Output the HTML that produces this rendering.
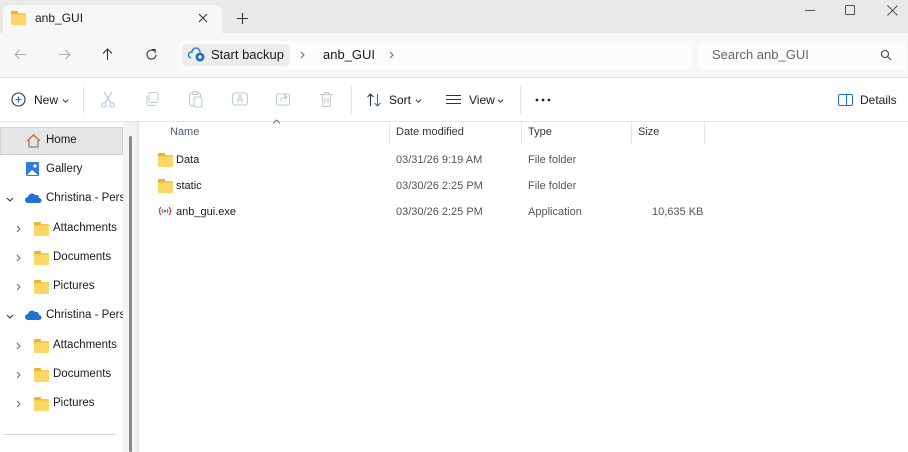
<!DOCTYPE html>
<html><head><style>
*{margin:0;padding:0;box-sizing:border-box}
body{width:908px;height:452px;overflow:hidden;background:#fff;font-family:"Segoe UI","Liberation Sans",sans-serif;font-size:12px;color:#1a1a1a;position:relative}
.a{position:absolute}
.t{position:absolute;white-space:nowrap}
.fold{position:absolute;width:15px;height:12px;background:#f8ca4d;border-radius:1px}
.fold:before{content:"";position:absolute;left:0;top:-2px;width:7px;height:3px;background:#e9b23a;border-radius:1px 1px 0 0}
.fold:after{content:"";position:absolute;left:0;top:2px;width:15px;height:10px;background:#fcd766;border-radius:1px}
.sb{font-size:11.5px}
</style></head><body>
<svg width="0" height="0" style="position:absolute"><defs>
<symbol id="cr" viewBox="0 0 8 8"><path d="M3 1l3 3-3 3" fill="none" stroke="#666" stroke-width="1"/></symbol>
<symbol id="cd" viewBox="0 0 8 8"><path d="M1 3l3 3 3-3" fill="none" stroke="#333" stroke-width="1.1"/></symbol>
</defs></svg>
<!-- title bar -->
<div class="a" style="left:0;top:0;width:908px;height:33px;background:#e9e9e9"></div>
<div class="a" style="left:3px;top:5px;width:219px;height:29px;background:#f7f7f7;border-radius:7px 7px 0 0"></div>
<div class="fold" style="left:11px;top:13px"></div>
<div class="t" style="left:35px;top:11px;font-size:12px">anb_GUI</div>
<svg class="a" style="left:198px;top:13px" width="10" height="10"><path d="M1 1l8 8M9 1l-8 8" stroke="#333" stroke-width="1.1"/></svg>
<svg class="a" style="left:237px;top:13px" width="11" height="11"><path d="M5.5 0v11M0 5.5h11" stroke="#333" stroke-width="1.1"/></svg>
<div class="a" style="left:805px;top:10px;width:10px;height:1px;background:#555"></div>
<div class="a" style="left:845px;top:5px;width:10px;height:10px;border:1px solid #555;border-radius:1px"></div>
<svg class="a" style="left:887px;top:5px" width="11" height="11"><path d="M.5.5l10 10M10.5.5l-10 10" stroke="#555" stroke-width="1"/></svg>
<!-- address row -->
<div class="a" style="left:0;top:33px;width:908px;height:45px;background:#f7f7f7;border-bottom:1px solid #dedede"></div>
<svg class="a" style="left:14px;top:49px" width="13" height="11"><path d="M12 5.5H1M5.5 1L1 5.5 5.5 10" fill="none" stroke="#aaa" stroke-width="1.1"/></svg>
<svg class="a" style="left:58px;top:49px" width="13" height="11"><path d="M1 5.5h11M7.5 1L12 5.5 7.5 10" fill="none" stroke="#aaa" stroke-width="1.1"/></svg>
<svg class="a" style="left:102px;top:48px" width="11" height="13"><path d="M5.5 12V1M1 5.5L5.5 1 10 5.5" fill="none" stroke="#333" stroke-width="1.1"/></svg>
<svg class="a" style="left:145px;top:48px" width="13" height="13"><path d="M11 6.5A4.5 4.5 0 1 1 9.5 3.2" fill="none" stroke="#333" stroke-width="1.1"/><path d="M7 1.5h3.2v3.2" fill="none" stroke="#333" stroke-width="1.1"/></svg>
<div class="a" style="left:180px;top:41px;width:512px;height:29px;background:#fcfcfc;border-radius:4px"></div>
<div class="a" style="left:182px;top:44px;width:108px;height:22px;background:#ececec;border-radius:4px"></div>
<svg class="a" style="left:188px;top:47px" width="18" height="16"><path d="M3 11a3 3 0 0 1 1-6 4 4 0 0 1 8 0" fill="none" stroke="#1f6fc4" stroke-width="1.3"/><circle cx="12" cy="10" r="4.5" fill="#1f6fc4"/><path d="M12 8v4M10 10h4" stroke="#fff" stroke-width="1.2"/></svg>
<div class="t" style="left:211px;top:47px;font-size:13px">Start backup</div>
<svg class="a" style="left:298px;top:51px" width="8" height="8"><use href="#cr"/></svg>
<div class="t" style="left:323px;top:47px;font-size:13px">anb_GUI</div>
<svg class="a" style="left:387px;top:51px" width="8" height="8"><use href="#cr"/></svg>
<div class="a" style="left:699px;top:41px;width:207px;height:29px;background:#fcfcfc;border-radius:4px"></div>
<div class="t" style="left:712px;top:47px;font-size:13px;color:#666">Search anb_GUI</div>
<svg class="a" style="left:880px;top:49px" width="12" height="12"><circle cx="5" cy="5" r="3.5" fill="none" stroke="#444" stroke-width="1.1"/><path d="M7.5 7.5L11 11" stroke="#444" stroke-width="1.1"/></svg>
<!-- toolbar -->
<div class="a" style="left:0;top:121px;width:908px;height:1px;background:#e5e5e5"></div>
<svg class="a" style="left:11px;top:92px" width="15" height="15"><circle cx="7.5" cy="7.5" r="6.5" fill="none" stroke="#333" stroke-width="1.1"/><path d="M7.5 4.5v6M4.5 7.5h6" stroke="#1f6fc4" stroke-width="1.1"/></svg>
<div class="t" style="left:34px;top:93px;font-size:12px">New</div>
<svg class="a" style="left:62px;top:97px" width="7" height="7"><use href="#cd"/></svg>
<div class="a" style="left:83px;top:86px;width:1px;height:28px;background:#e2e2e2"></div>
<svg class="a" style="left:100px;top:91px" width="16" height="17"><path d="M4 1l7 11M12 1L5 12" stroke="#a9c4e3" stroke-width="1.1" fill="none"/><circle cx="4" cy="14" r="2.2" fill="none" stroke="#a9c4e3"/><circle cx="12" cy="14" r="2.2" fill="none" stroke="#a9c4e3"/></svg>
<svg class="a" style="left:144px;top:91px" width="16" height="16"><rect x="5" y="1.5" width="9" height="10" rx="2" fill="none" stroke="#b8c8dc"/><path d="M3 4.5v7a3 3 0 0 0 3 3h5" fill="none" stroke="#b8c8dc"/></svg>
<svg class="a" style="left:188px;top:90px" width="16" height="18"><rect x="1.5" y="3" width="11" height="13" rx="2" fill="none" stroke="#c3c3c3"/><rect x="6" y="7" width="8" height="10" rx="1.5" fill="#fff" stroke="#b8c8dc"/><rect x="4.5" y="1.5" width="5" height="3" rx="1" fill="#fff" stroke="#c3c3c3"/></svg>
<svg class="a" style="left:231px;top:91px" width="18" height="16"><rect x="1.5" y="2" width="15" height="12" rx="3" fill="none" stroke="#b8c8dc"/><path d="M6 11l3-7 3 7M7 9h4" stroke="#b8c8dc" fill="none"/></svg>
<svg class="a" style="left:275px;top:91px" width="17" height="16"><rect x="1.5" y="3" width="13" height="11" rx="2" fill="none" stroke="#b8c8dc"/><path d="M5 10c1-3 3-4 7-4M9.5 3.5L12 6 9.5 8.5" fill="none" stroke="#b8c8dc"/></svg>
<svg class="a" style="left:319px;top:91px" width="15" height="17"><path d="M1 3.5h13M5.5 3.5V1.5h4v2M3 3.5l1 12h7l1-12M6 6.5v6M9 6.5v6" fill="none" stroke="#c3c3c3"/></svg>
<div class="a" style="left:351px;top:86px;width:1px;height:28px;background:#e2e2e2"></div>
<svg class="a" style="left:366px;top:92px" width="16" height="16"><path d="M4.5 14V2M1.5 5l3-3 3 3" fill="none" stroke="#333" stroke-width="1.1"/><path d="M11.5 2v12M8.5 11l3 3 3-3" fill="none" stroke="#1f6fc4" stroke-width="1.1"/></svg>
<div class="t" style="left:389px;top:93px;font-size:12px">Sort</div>
<svg class="a" style="left:415px;top:97px" width="7" height="7"><use href="#cd"/></svg>
<svg class="a" style="left:446px;top:94px" width="15" height="11"><path d="M0 1.5h15M0 5.5h15M0 9.5h15" stroke="#333" stroke-width="1"/></svg>
<div class="t" style="left:469px;top:93px;font-size:12px">View</div>
<svg class="a" style="left:497px;top:97px" width="7" height="7"><use href="#cd"/></svg>
<div class="a" style="left:520px;top:86px;width:1px;height:28px;background:#e2e2e2"></div>
<svg class="a" style="left:535px;top:98px" width="16" height="4"><circle cx="2" cy="2" r="1.4" fill="#222"/><circle cx="8" cy="2" r="1.4" fill="#222"/><circle cx="14" cy="2" r="1.4" fill="#222"/></svg>
<div class="a" style="left:838px;top:94px;width:15px;height:12px;border:1.3px solid #1f6fc4;border-radius:2px"></div>
<div class="a" style="left:846px;top:94px;width:1.3px;height:12px;background:#1f6fc4"></div>
<div class="t" style="left:860px;top:93px;font-size:12px">Details</div>
<!-- sidebar -->
<div class="a" style="left:0;top:127px;width:123px;height:28px;background:#e5e5e5;border:1px solid #cfcfcf"></div>
<svg class="a" style="left:25px;top:133px" width="17" height="15"><path d="M2 8L8.5 2 15 8" fill="none" stroke="#d86b2a" stroke-width="1.5"/><path d="M4 7v7h9V7" fill="none" stroke="#888" stroke-width="1.3"/></svg>
<div class="t sb" style="left:46px;top:134px">Home</div>
<svg class="a" style="left:25px;top:161px" width="15" height="16"><rect x="1" y="1" width="13" height="14" rx="1" fill="#2f7fd6"/><path d="M2 14l5-5 6 5z" fill="#fff"/><circle cx="10" cy="5" r="1.6" fill="#fff"/></svg>
<div class="t sb" style="left:46px;top:163px">Gallery</div>
<svg class="a" style="left:6px;top:195px" width="8" height="8"><use href="#cd"/></svg>
<svg class="a" style="left:25px;top:193px" width="17" height="11"><path d="M3 10a3 3 0 0 1 0-6 4 4 0 0 1 7-2 3 3 0 0 1 4 3 2.5 2.5 0 0 1 0 5z" fill="#1e73d6"/></svg>
<div class="t sb" style="left:46px;top:192px;width:77px;overflow:hidden">Christina - Personal</div>
<svg class="a" style="left:14px;top:225px" width="8" height="8"><use href="#cr"/></svg><div class="fold" style="left:34px;top:224px"></div><div class="t sb" style="left:53px;top:222px">Attachments</div>
<svg class="a" style="left:14px;top:254px" width="8" height="8"><use href="#cr"/></svg><div class="fold" style="left:34px;top:253px"></div><div class="t sb" style="left:53px;top:251px">Documents</div>
<svg class="a" style="left:14px;top:283px" width="8" height="8"><use href="#cr"/></svg><div class="fold" style="left:34px;top:282px"></div><div class="t sb" style="left:53px;top:280px">Pictures</div>
<svg class="a" style="left:6px;top:312px" width="8" height="8"><use href="#cd"/></svg>
<svg class="a" style="left:25px;top:310px" width="17" height="11"><path d="M3 10a3 3 0 0 1 0-6 4 4 0 0 1 7-2 3 3 0 0 1 4 3 2.5 2.5 0 0 1 0 5z" fill="#1e73d6"/></svg>
<div class="t sb" style="left:46px;top:309px;width:77px;overflow:hidden">Christina - Personal</div>
<svg class="a" style="left:14px;top:342px" width="8" height="8"><use href="#cr"/></svg><div class="fold" style="left:34px;top:341px"></div><div class="t sb" style="left:53px;top:339px">Attachments</div>
<svg class="a" style="left:14px;top:371px" width="8" height="8"><use href="#cr"/></svg><div class="fold" style="left:34px;top:370px"></div><div class="t sb" style="left:53px;top:368px">Documents</div>
<svg class="a" style="left:14px;top:400px" width="8" height="8"><use href="#cr"/></svg><div class="fold" style="left:34px;top:399px"></div><div class="t sb" style="left:53px;top:397px">Pictures</div>
<div class="a" style="left:4px;top:434px;width:111px;height:1px;background:#d5d5d5"></div>
<div class="a" style="left:123px;top:122px;width:17px;height:330px;background:#f3f3f3"></div>
<div class="a" style="left:129px;top:136px;width:3px;height:316px;background:#8a8a8a;border-radius:2px"></div>
<div class="a" style="left:137px;top:122px;width:1px;height:330px;background:#e0e0e0"></div>
<!-- header -->
<svg class="a" style="left:272px;top:119px" width="9" height="5"><path d="M1 4.5L4.5 1 8 4.5" fill="none" stroke="#777"/></svg>
<div class="t" style="left:170px;top:126px;font-size:11px;color:#4a5a7a">Name</div>
<div class="a" style="left:389px;top:122px;width:1px;height:22px;background:#e5e5e5"></div>
<div class="t" style="left:396px;top:126px;font-size:11px;color:#333">Date modified</div>
<div class="a" style="left:521px;top:122px;width:1px;height:22px;background:#e5e5e5"></div>
<div class="t" style="left:528px;top:126px;font-size:11px;color:#333">Type</div>
<div class="a" style="left:631px;top:122px;width:1px;height:22px;background:#e5e5e5"></div>
<div class="t" style="left:638px;top:126px;font-size:11px;color:#333">Size</div>
<div class="a" style="left:704px;top:122px;width:1px;height:22px;background:#e5e5e5"></div>
<!-- rows -->
<div class="fold" style="left:158px;top:155px"></div>
<div class="t" style="left:176px;top:154px;font-size:11px">Data</div>
<div class="t" style="left:396px;top:154px;font-size:11px;color:#555">03/31/26 9:19 AM</div>
<div class="t" style="left:528px;top:154px;font-size:11px;color:#555">File folder</div>
<div class="fold" style="left:158px;top:181px"></div>
<div class="t" style="left:176px;top:180px;font-size:11px">static</div>
<div class="t" style="left:396px;top:180px;font-size:11px;color:#555">03/30/26 2:25 PM</div>
<div class="t" style="left:528px;top:180px;font-size:11px;color:#555">File folder</div>
<svg class="a" style="left:158px;top:205px" width="14" height="12"><path d="M3 2a6 6 0 0 0 0 8M11 2a6 6 0 0 1 0 8" fill="none" stroke="#c04060" stroke-width="1.2"/><path d="M5 4a3 3 0 0 0 0 4M9 4a3 3 0 0 1 0 4" fill="none" stroke="#7060c0" stroke-width="1.2"/><circle cx="7" cy="6" r="1.3" fill="#2aa050"/></svg>
<div class="t" style="left:176px;top:206px;font-size:11px">anb_gui.exe</div>
<div class="t" style="left:396px;top:206px;font-size:11px;color:#555">03/30/26 2:25 PM</div>
<div class="t" style="left:528px;top:206px;font-size:11px;color:#555">Application</div>
<div class="t" style="left:652px;top:206px;font-size:11px;color:#555">10,635 KB</div>
</body></html>
